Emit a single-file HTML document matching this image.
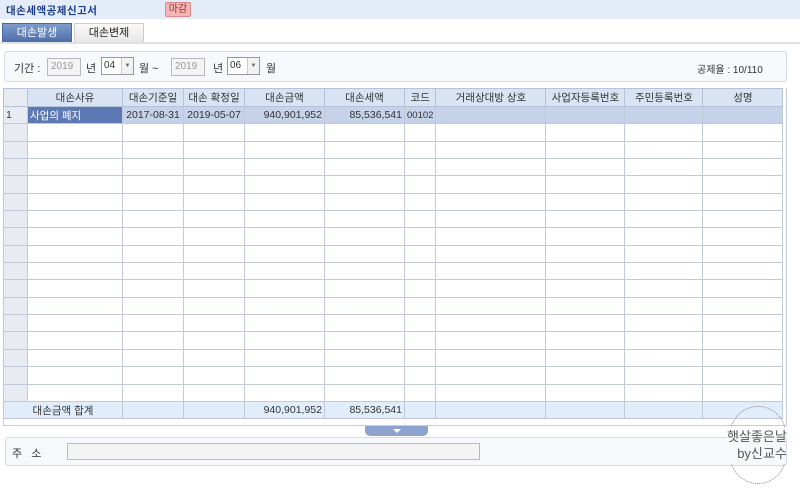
<!DOCTYPE html>
<html><head><meta charset="utf-8">
<style>
*{margin:0;padding:0;box-sizing:border-box}
body{width:800px;height:500px;background:#fff;position:relative;overflow:hidden;font-family:"Liberation Sans","Noto Sans CJK KR","NanumGothic",sans-serif;font-size:11px;color:#333}
.abs{position:absolute}
#title{left:0;top:0;width:800px;height:19px;background:#e4ecfa}
#title span{position:absolute;left:6px;top:3px;font-weight:bold;color:#1d3f8a;font-size:10.5px;letter-spacing:.5px}
#badge{left:165px;top:2px;width:26px;height:15px;background:#f3b6b6;border:1px solid #d68a8a;color:#a03030;font-size:10px;text-align:center;line-height:13px;border-radius:2px}
.tab{top:23px;height:20px;width:70px;text-align:center;line-height:19px;font-size:11px}
#t1{left:2px;background:linear-gradient(#7f9bcb,#4d6ea9);color:#fff;border:1px solid #4a69a0}
#t2{left:74px;background:linear-gradient(#fafafa,#e8e8e8);border:1px solid #ccc;color:#222}
#tline{left:0;top:42px;width:800px;height:2px;background:#e2e2e2}
#filter{left:4px;top:51px;width:783px;height:31px;border:1px solid #d6dde8;background:#f6f8fb;border-radius:3px}
.inp{height:18px;border:1px solid #b8b8b8;background:#f4f4f4;color:#999;font-size:10px;line-height:16px;padding-left:3px}
.sel{height:18px;border:1px solid #999;background:#fff;font-size:10px;line-height:16px;padding-left:2px}
.sel b{position:absolute;right:0;top:0;width:12px;height:16px;border-left:1px solid #ccc;background:#f2f2f2;font-size:6px;text-align:center;line-height:16px;color:#666;font-weight:normal}
#gridbox{left:3px;top:88px;width:784px;height:338px;border:1px solid #c6ccd8;border-top:none}
table{position:absolute;left:3px;top:88px;border-collapse:collapse;table-layout:fixed}
td{border:1px solid #c3c9d6;height:17.35px;font-size:10.5px;white-space:nowrap;overflow:hidden;padding:0 2px}
tr.h td{background:#d8e4f4;text-align:center;height:18px;border-color:#b6c2d8}
td.rh{background:#e8ebf2}
tr.sel1 td{background:#c5d2ea}
tr.sel1 td.hi{background:#5c79b6;color:#fff}
tr.tot td{background:#e1edfb}
.r{text-align:right}.c{text-align:center}
#tog{left:365px;top:426px;width:63px;height:10px;background:#8fa3d0;border-radius:0 0 5px 5px}
#tog:after{content:"";position:absolute;left:28px;top:3px;border-left:4px solid transparent;border-right:4px solid transparent;border-top:4px solid #fff}
#addr{left:5px;top:437px;width:782px;height:29px;border:1px solid #d6dde8;background:#f6f8fb;border-radius:3px}
#ai{left:67px;top:443px;width:413px;height:17px;border:1px solid #bbb;background:#f4f4f4}
#wm{left:727px;top:427px;font-size:13px;color:#555;line-height:17px;text-align:right}
.dots{border:1.5px dotted #888;border-radius:50%;width:56px;height:56px}
</style></head><body>
<div id="title" class="abs"><span>대손세액공제신고서</span></div>
<div id="badge" class="abs">마감</div>
<div id="t1" class="abs tab">대손발생</div>
<div id="t2" class="abs tab">대손변제</div>
<div id="tline" class="abs"></div>
<div id="filter" class="abs"></div>
<div class="abs" style="left:14px;top:60px">기간 :</div>
<div class="abs inp" style="left:47px;top:58px;width:34px">2019</div>
<div class="abs" style="left:86px;top:60px">년</div>
<div class="abs sel" style="left:101px;top:57px;width:33px">04<b>▼</b></div>
<div class="abs" style="left:139px;top:60px">월 ~</div>
<div class="abs inp" style="left:171px;top:58px;width:34px">2019</div>
<div class="abs" style="left:213px;top:60px">년</div>
<div class="abs sel" style="left:227px;top:57px;width:33px">06<b>▼</b></div>
<div class="abs" style="left:266px;top:60px">월</div>
<div class="abs" style="left:697px;top:61px;font-size:10px">공제율 : 10/110</div>
<div id="gridbox" class="abs"></div>
<table>
<colgroup><col style="width:24px"><col style="width:95px"><col style="width:61px"><col style="width:61px"><col style="width:80px"><col style="width:80px"><col style="width:31px"><col style="width:110px"><col style="width:79px"><col style="width:78px"><col style="width:80px"></colgroup>
<tr class="h"><td style="background:#e8ebf2"></td><td>대손사유</td><td>대손기준일</td><td>대손 확정일</td><td>대손금액</td><td>대손세액</td><td>코드</td><td>거래상대방 상호</td><td>사업자등록번호</td><td>주민등록번호</td><td>성명</td></tr>
<tr class="sel1"><td class="rh" style="background:#e8ebf2">1</td><td class="hi">사업의 폐지</td><td class="c">2017-08-31</td><td class="c">2019-05-07</td><td class="r">940,901,952</td><td class="r">85,536,541</td><td style="font-size:9.5px">00102</td><td></td><td></td><td></td><td></td></tr>
<tr><td class="rh"></td><td></td><td></td><td></td><td></td><td></td><td></td><td></td><td></td><td></td><td></td></tr>
<tr><td class="rh"></td><td></td><td></td><td></td><td></td><td></td><td></td><td></td><td></td><td></td><td></td></tr>
<tr><td class="rh"></td><td></td><td></td><td></td><td></td><td></td><td></td><td></td><td></td><td></td><td></td></tr>
<tr><td class="rh"></td><td></td><td></td><td></td><td></td><td></td><td></td><td></td><td></td><td></td><td></td></tr>
<tr><td class="rh"></td><td></td><td></td><td></td><td></td><td></td><td></td><td></td><td></td><td></td><td></td></tr>
<tr><td class="rh"></td><td></td><td></td><td></td><td></td><td></td><td></td><td></td><td></td><td></td><td></td></tr>
<tr><td class="rh"></td><td></td><td></td><td></td><td></td><td></td><td></td><td></td><td></td><td></td><td></td></tr>
<tr><td class="rh"></td><td></td><td></td><td></td><td></td><td></td><td></td><td></td><td></td><td></td><td></td></tr>
<tr><td class="rh"></td><td></td><td></td><td></td><td></td><td></td><td></td><td></td><td></td><td></td><td></td></tr>
<tr><td class="rh"></td><td></td><td></td><td></td><td></td><td></td><td></td><td></td><td></td><td></td><td></td></tr>
<tr><td class="rh"></td><td></td><td></td><td></td><td></td><td></td><td></td><td></td><td></td><td></td><td></td></tr>
<tr><td class="rh"></td><td></td><td></td><td></td><td></td><td></td><td></td><td></td><td></td><td></td><td></td></tr>
<tr><td class="rh"></td><td></td><td></td><td></td><td></td><td></td><td></td><td></td><td></td><td></td><td></td></tr>
<tr><td class="rh"></td><td></td><td></td><td></td><td></td><td></td><td></td><td></td><td></td><td></td><td></td></tr>
<tr><td class="rh"></td><td></td><td></td><td></td><td></td><td></td><td></td><td></td><td></td><td></td><td></td></tr>
<tr><td class="rh"></td><td></td><td></td><td></td><td></td><td></td><td></td><td></td><td></td><td></td><td></td></tr>
<tr class="tot"><td colspan="2" class="c">대손금액 합계</td><td></td><td></td><td class="r">940,901,952</td><td class="r">85,536,541</td><td></td><td></td><td></td><td></td><td></td></tr>
</table>
<div id="tog" class="abs"></div>
<div id="addr" class="abs"></div>
<div class="abs" style="left:12px;top:445px">주 &nbsp; 소</div>
<div id="ai" class="abs"></div>
<div class="abs dots" style="left:730px;top:406px;clip-path:inset(0 0 62% 0)"></div>
<div class="abs dots" style="left:730px;top:428px;clip-path:inset(64% 0 0 0)"></div>
<div id="wm" class="abs" style="top:428px">햇살좋은날<br>by신교수</div>
</body></html>
